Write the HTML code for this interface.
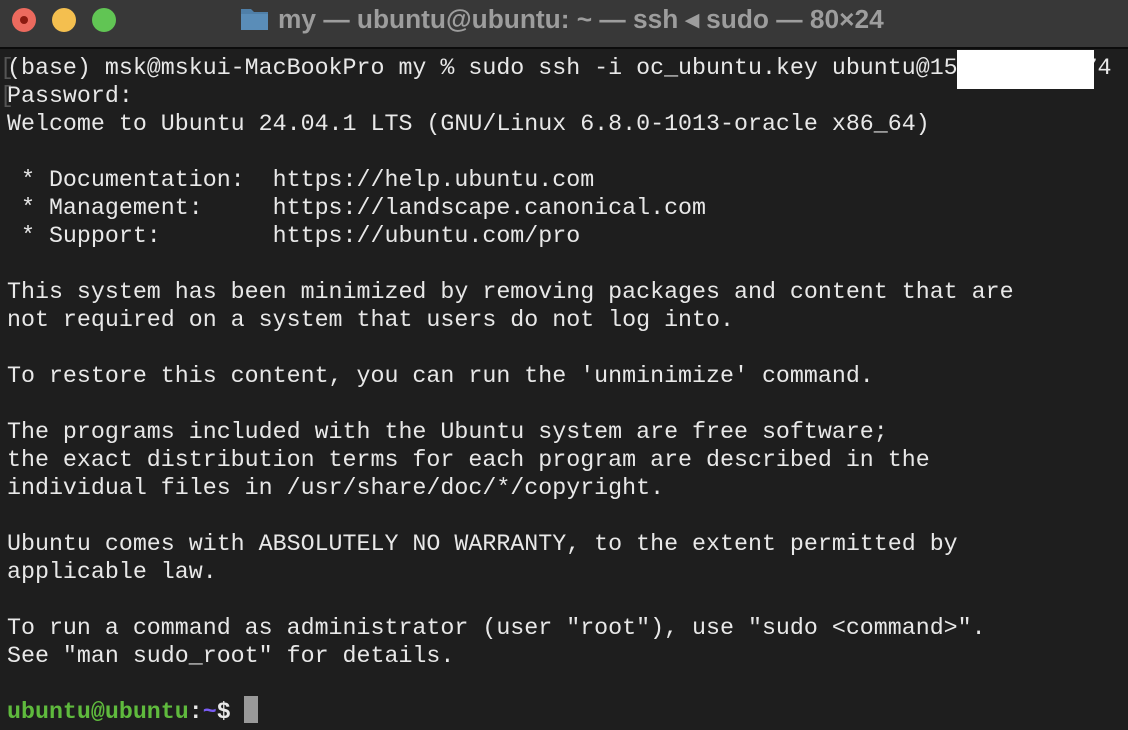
<!DOCTYPE html>
<html><head><style>
html,body{margin:0;padding:0;width:1128px;height:730px;overflow:hidden;background:#1e1e1e}
.tb{position:absolute;left:0;top:0;width:1128px;height:47px;background:#383838;border-bottom:2px solid #0c0c0c}
.dot{position:absolute;top:8px;width:24px;height:24px;border-radius:50%}
.title{position:absolute;left:278px;top:4px;font:bold 26.3px "Liberation Sans",sans-serif;color:#9d9d9d;white-space:pre}
pre{position:absolute;left:7px;top:54px;margin:0;font:23.3px/28px "Liberation Mono",monospace;color:#e8e8e8}
.g{color:#5fba3d;font-weight:bold}.b{color:#7a5cf5;font-weight:bold}.w{font-weight:bold}
</style></head><body>
<div class="tb">
<div class="dot" style="left:12px;background:#ec6a5e"><div style="position:absolute;left:8px;top:8px;width:8px;height:8px;border-radius:50%;background:#8c1a10"></div></div>
<div class="dot" style="left:52px;background:#f4bf4f"></div>
<div class="dot" style="left:92px;background:#61c554"></div>
<svg style="position:absolute;left:240px;top:6px" width="29" height="25"><path d="M1 3h10l3 3h14v18H1z" fill="#4f7fa8"/><rect x="1" y="8" width="27" height="16" fill="#5a8db8"/></svg>
<div class="title">my — ubuntu@ubuntu: ~ — ssh ◂ sudo — 80×24</div>
</div>
<div style="position:absolute;left:0;top:54px;color:#555;font:23px/28px 'Liberation Mono',monospace">[<br>[</div>
<pre>(base) msk@mskui-MacBookPro my % sudo ssh -i oc_ubuntu.key ubuntu@15         74
Password:
Welcome to Ubuntu 24.04.1 LTS (GNU/Linux 6.8.0-1013-oracle x86_64)

 * Documentation:  https://help.ubuntu.com
 * Management:     https://landscape.canonical.com
 * Support:        https://ubuntu.com/pro

This system has been minimized by removing packages and content that are
not required on a system that users do not log into.

To restore this content, you can run the 'unminimize' command.

The programs included with the Ubuntu system are free software;
the exact distribution terms for each program are described in the
individual files in /usr/share/doc/*/copyright.

Ubuntu comes with ABSOLUTELY NO WARRANTY, to the extent permitted by
applicable law.

To run a command as administrator (user "root"), use "sudo &lt;command&gt;".
See "man sudo_root" for details.

<span class="g">ubuntu@ubuntu</span><span class="w">:</span><span class="b">~</span><span class="w">$</span> </pre>
<div style="position:absolute;left:957px;top:50px;width:137px;height:39px;background:#fff"></div>
<div style="position:absolute;left:244px;top:696px;width:14px;height:27px;background:#999"></div>
</body></html>
